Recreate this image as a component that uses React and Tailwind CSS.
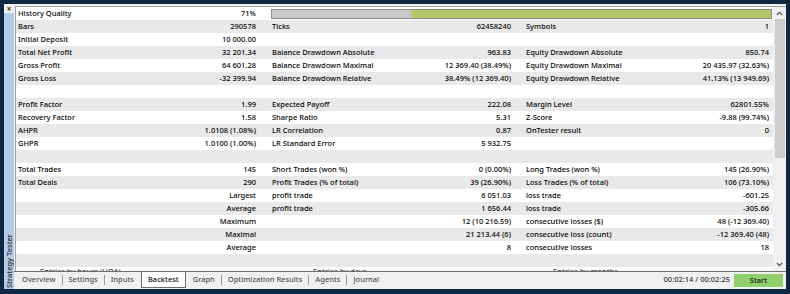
import React from "react";

const BAR = "__bar__";

const rows = [
  ["History Quality", "71%", BAR],
  ["Bars", "290578", "Ticks", "62458240", "Symbols", "1"],
  ["Initial Deposit", "10 000.00", "", "", "", ""],
  ["Total Net Profit", "32 201.34", "Balance Drawdown Absolute", "963.83", "Equity Drawdown Absolute", "850.74"],
  ["Gross Profit", "64 601.28", "Balance Drawdown Maximal", "12 369.40 (38.49%)", "Equity Drawdown Maximal", "20 435.97 (32.63%)"],
  ["Gross Loss", "-32 399.94", "Balance Drawdown Relative", "38.49% (12 369.40)", "Equity Drawdown Relative", "41.13% (13 949.69)"],
  ["", "", "", "", "", ""],
  ["Profit Factor", "1.99", "Expected Payoff", "222.08", "Margin Level", "62801.55%"],
  ["Recovery Factor", "1.58", "Sharpe Ratio", "5.31", "Z-Score", "-9.88 (99.74%)"],
  ["AHPR", "1.0108 (1.08%)", "LR Correlation", "0.87", "OnTester result", "0"],
  ["GHPR", "1.0100 (1.00%)", "LR Standard Error", "5 932.75", "", ""],
  ["", "", "", "", "", ""],
  ["Total Trades", "145", "Short Trades (won %)", "0 (0.00%)", "Long Trades (won %)", "145 (26.90%)"],
  ["Total Deals", "290", "Profit Trades (% of total)", "39 (26.90%)", "Loss Trades (% of total)", "106 (73.10%)"],
  ["", "Largest", "profit trade", "6 051.03", "loss trade", "-601.25"],
  ["", "Average", "profit trade", "1 656.44", "loss trade", "-305.66"],
  ["", "Maximum", "", "12 (10 216.59)", "consecutive losses ($)", "48 (-12 369.40)"],
  ["", "Maximal", "", "21 213.44 (6)", "consecutive loss (count)", "-12 369.40 (48)"],
  ["", "Average", "", "8", "consecutive losses", "18"],
  ["", "", "", "", "", ""],
];

function Row({ r, i }) {
  const bg = i % 2 === 1 ? "bg-[#e9e9e9]" : "bg-white";
  if (r[2] === BAR) {
    return (
      <div className={`flex h-[13px] shrink-0 items-center leading-[13px] ${bg}`}>
        <div className="flex w-[243px] justify-between pl-[2px] pr-[3px]">
          <span>{r[0]}</span>
          <span>{r[1]}</span>
        </div>
        <div className="flex flex-1 pl-[12px] pr-[1px]">
          <div className="flex h-[10px] w-full border border-[#8c8c8c]">
            <div className="h-full w-[139px] bg-[#c9c9c9]" />
            <div className="h-full flex-1 bg-[#b3c66c]" />
          </div>
        </div>
      </div>
    );
  }
  return (
    <div className={`flex h-[13px] shrink-0 items-center leading-[13px] ${bg}`}>
      <div className="flex w-[243px] justify-between pl-[2px] pr-[3px]">
        <span>{r[0]}</span>
        <span>{r[1]}</span>
      </div>
      <div className="flex w-[255px] justify-between pl-[13px] pr-[3px]">
        <span>{r[2]}</span>
        <span>{r[3]}</span>
      </div>
      <div className="flex flex-1 justify-between pl-[12px] pr-[4px]">
        <span>{r[4]}</span>
        <span>{r[5]}</span>
      </div>
    </div>
  );
}

function Sep() {
  return <div className="h-[10px] w-px bg-[#9a9a9a]" />;
}

export default function App() {
  return (
    <div
      className="flex h-[294px] w-[790px] flex-col overflow-hidden bg-[#0f2743] px-[4px] pt-[4px] text-[7.5px] font-medium text-[#050505]"
      style={{ fontFamily: '"Noto Sans", "Open Sans", sans-serif' }}
    >
      <div className="flex h-[285px] w-[782px]">
        {/* left strip */}
        <div className="flex w-[10px] flex-col">
          <div className="flex h-[9px] items-center justify-center bg-[#f0f0f0] text-[8px] font-bold leading-none text-[#333]">
            ×
          </div>
          <div className="flex flex-1 flex-col justify-end bg-[#b5cce6] pb-[1px]">
            <div className="flex justify-center">
              <span className="rotate-180 leading-[10px] text-[#1d2a3a] [writing-mode:vertical-rl]">
                Strategy Tester
              </span>
            </div>
          </div>
        </div>
        {/* main */}
        <div className="flex w-[772px] flex-col bg-[#f0f0f0]">
          <div className="flex h-[267px] flex-col pl-[1px] pt-[2px]">
            <div className="flex h-[265px] border-l border-t border-[#a3a3a3]">
              <div className="flex w-[757px] flex-col overflow-hidden">
                {rows.map((r, i) => (
                  <Row key={i} r={r} i={i} />
                ))}
                <div className="flex h-[4px] shrink-0 items-start overflow-hidden bg-white text-[#444]">
                  <div className="w-[297px] shrink-0 pl-[24px] leading-[8px]">Entries by hours (HOA)</div>
                  <div className="w-[240px] shrink-0 leading-[8px]">Entries by days</div>
                  <div className="leading-[8px]">Entries by months</div>
                </div>
              </div>
              {/* scrollbar */}
              <div className="flex w-[13px] flex-col bg-[#f0f0f0]">
                <div className="flex h-[12px] items-center justify-center">
                  <svg width="7" height="5" viewBox="0 0 7 5">
                    <path d="M0.8 4 L3.5 1.3 L6.2 4" fill="none" stroke="#555" strokeWidth="1.2" />
                  </svg>
                </div>
                <div className="ml-[2px] mr-[1px] h-[139px] bg-[#cdcdcd]" />
                <div className="flex-1" />
                <div className="flex h-[14px] items-center justify-center">
                  <svg width="7" height="5" viewBox="0 0 7 5">
                    <path d="M0.8 1 L3.5 3.7 L6.2 1" fill="none" stroke="#555" strokeWidth="1.2" />
                  </svg>
                </div>
              </div>
            </div>
          </div>
          {/* tab strip */}
          <div className="flex h-[18px] items-start border-t border-[#6e6e6e] bg-[#f0f0f0] pl-[8px] pr-[3px] text-[#505050]">
            <div className="flex h-[16px] items-center gap-[6px]">
              <span>Overview</span>
              <Sep />
              <span>Settings</span>
              <Sep />
              <span>Inputs</span>
            </div>
            <div className="ml-[7px] flex h-[16px] items-center border-x border-b border-[#6e6e6e] bg-white px-[6px] text-[#111]">
              Backtest
            </div>
            <div className="ml-[7px] flex h-[16px] items-center gap-[6px]">
              <span>Graph</span>
              <Sep />
              <span>Optimization Results</span>
              <Sep />
              <span>Agents</span>
              <Sep />
              <span>Journal</span>
            </div>
            <div className="flex-1" />
            <div className="flex h-[16px] items-center text-[#333]">00:02:14 / 00:02:25</div>
            <div className="ml-[4px] mt-[2px] flex h-[13px] w-[49px] items-center justify-center bg-[#8fd06a] text-[#111]">
              Start
            </div>
          </div>
        </div>
      </div>
    </div>
  );
}
